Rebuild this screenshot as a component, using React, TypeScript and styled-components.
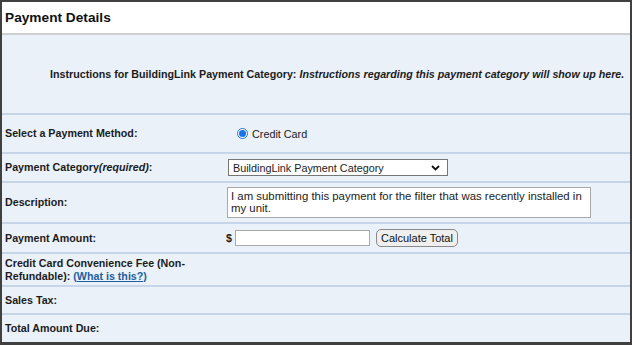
import React from "react";
import styled, { createGlobalStyle } from "styled-components";

const GlobalStyle = createGlobalStyle`
  html, body {
    margin: 0;
    padding: 0;
    background: #fff;
  }
  body {
    font-family: "Liberation Sans", Arial, sans-serif;
    color: #1c1c1c;
  }
`;

const Panel = styled.div`
  width: 632px;
  height: 345px;
  box-sizing: border-box;
  border: 2px solid #404040;
  border-bottom-width: 3px;
  background: #eaf1f9;
  display: flex;
  flex-direction: column;
  overflow: hidden;
`;

const Header = styled.div`
  height: 33px;
  flex-shrink: 0;
  box-sizing: border-box;
  background: #fff;
  border-bottom: 2px solid #cfcfcf;
  display: flex;
  align-items: center;
  padding-left: 3px;
  font-weight: bold;
  font-size: 13.7px;
  color: #111;
`;

const Instructions = styled.div`
  height: 80px;
  flex-shrink: 0;
  box-sizing: border-box;
  border-bottom: 2px solid #c6d6e8;
  display: flex;
  align-items: center;
  padding-left: 48px;
  font-size: 10.7px;
  font-weight: bold;
  white-space: nowrap;

  em {
    font-style: italic;
  }
`;

const Row = styled.div<{ $h: number }>`
  height: ${(p) => p.$h}px;
  flex-shrink: 0;
  box-sizing: border-box;
  border-bottom: 2px solid #c6d6e8;
  display: grid;
  grid-template-columns: 221px 1fr;
  align-items: center;
  padding-left: 3px;

  &:last-child {
    border-bottom: none;
    flex: 1;
  }
`;

const Label = styled.div`
  font-size: 10.7px;
  font-weight: bold;
  line-height: 13px;
  padding-right: 20px;

  i {
    font-style: italic;
  }
`;

const Value = styled.div`
  display: flex;
  align-items: center;
  font-size: 10.7px;
`;

const RadioWrap = styled.label`
  display: flex;
  align-items: center;
  gap: 4px;
  margin-left: 11px;
  font-size: 10.8px;
`;

const Radio = styled.span`
  width: 11px;
  height: 11px;
  border-radius: 50%;
  border: 1px solid #1a73e8;
  box-sizing: border-box;
  background: #fff;
  display: flex;
  align-items: center;
  justify-content: center;

  &::after {
    content: "";
    width: 7px;
    height: 7px;
    border-radius: 50%;
    background: #1a73e8;
  }
`;

const SelectBox = styled.div`
  width: 220px;
  height: 17px;
  box-sizing: border-box;
  border: 1px solid #767676;
  background: #fff;
  display: flex;
  align-items: center;
  justify-content: space-between;
  padding: 0 7px 0 4px;
  font-size: 10.8px;
  margin-left: 2px;
`;

const TextArea = styled.div`
  width: 364px;
  height: 31px;
  box-sizing: border-box;
  border: 1px solid #a9a9a9;
  background: #fff;
  padding: 2px 3px;
  font-size: 11.4px;
  line-height: 12px;
  color: #222;
  margin-left: 1px;
`;

const Dollar = styled.span`
  font-weight: bold;
  font-size: 10.7px;
  margin-right: 3px;
`;

const AmountInput = styled.div`
  width: 135px;
  height: 16px;
  box-sizing: border-box;
  border: 1px solid #a9a9a9;
  background: #fff;
`;

const CalcButton = styled.button`
  margin-left: 6px;
  height: 18px;
  padding: 0 4px;
  border: 1px solid #8a8a8a;
  border-radius: 5px;
  background: #efefef;
  font-family: "Liberation Sans", Arial, sans-serif;
  font-size: 11px;
  color: #111;
`;

const Link = styled.a`
  color: #1f5f9e;
  text-decoration: underline;
`;

export default function App() {
  return (
    <>
      <GlobalStyle />
      <Panel>
        <Header>Payment Details</Header>
        <Instructions>
          Instructions for BuildingLink Payment Category:&nbsp;
          <em>Instructions regarding this payment category will show up here.</em>
        </Instructions>
        <Row $h={39}>
          <Label>Select a Payment Method:</Label>
          <Value>
            <RadioWrap>
              <Radio />
              Credit Card
            </RadioWrap>
          </Value>
        </Row>
        <Row $h={29}>
          <Label>
            Payment Category<i>(required)</i>:
          </Label>
          <Value>
            <SelectBox>
              BuildingLink Payment Category
              <svg width="9" height="6" viewBox="0 0 9 6">
                <path d="M1 1l3.5 3.5L8 1" fill="none" stroke="#111" strokeWidth="1.8" />
              </svg>
            </SelectBox>
          </Value>
        </Row>
        <Row $h={41}>
          <Label>Description:</Label>
          <Value>
            <TextArea>
              I am submitting this payment for the filter that was recently installed in my unit.
            </TextArea>
          </Value>
        </Row>
        <Row $h={30}>
          <Label>Payment Amount:</Label>
          <Value>
            <Dollar>$</Dollar>
            <AmountInput />
            <CalcButton>Calculate Total</CalcButton>
          </Value>
        </Row>
        <Row $h={33}>
          <Label>
            Credit Card Convenience Fee (Non-Refundable): <Link href="#">(What is this?)</Link>
          </Label>
          <Value />
        </Row>
        <Row $h={28}>
          <Label>Sales Tax:</Label>
          <Value />
        </Row>
        <Row $h={28}>
          <Label>Total Amount Due:</Label>
          <Value />
        </Row>
      </Panel>
    </>
  );
}
